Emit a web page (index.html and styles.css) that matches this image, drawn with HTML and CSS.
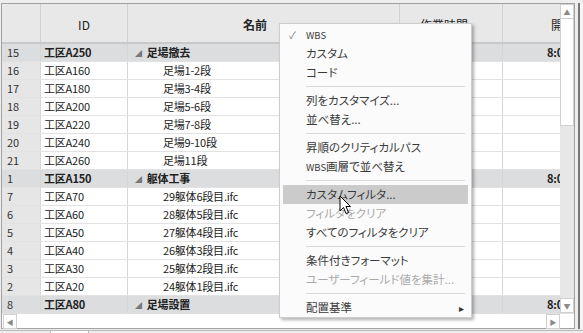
FILE: index.html
```html
<!DOCTYPE html>
<html lang="ja">
<head>
    <meta charset="UTF-8">
    <title>工程表</title>
    <link rel="stylesheet" href="styles.css">
</head>
<body>
    <div class="frame">
        <div class="main">
            <div class="table">
                <div class="cols head">
                    <div class="num"></div>
                    <div class="hcell">ID</div>
                    <div class="hcell bold">名前</div>
                    <div class="hcell work">作業時間</div>
                    <div class="hcell last">開始</div>
                </div>
                <div class="cols row group"><div class="num">15</div><div class="cell">工区A250</div><div class="cell name"><span class="tri">◢</span>足場撤去</div><div class="cell"></div><div class="cell time">8:00</div></div>
                <div class="cols row"><div class="num">16</div><div class="cell">工区A160</div><div class="cell child">足場1-2段</div><div class="cell"></div><div class="cell"></div></div>
                <div class="cols row"><div class="num">17</div><div class="cell">工区A180</div><div class="cell child">足場3-4段</div><div class="cell"></div><div class="cell"></div></div>
                <div class="cols row"><div class="num">18</div><div class="cell">工区A200</div><div class="cell child">足場5-6段</div><div class="cell"></div><div class="cell"></div></div>
                <div class="cols row"><div class="num">19</div><div class="cell">工区A220</div><div class="cell child">足場7-8段</div><div class="cell"></div><div class="cell"></div></div>
                <div class="cols row"><div class="num">20</div><div class="cell">工区A240</div><div class="cell child">足場9-10段</div><div class="cell"></div><div class="cell"></div></div>
                <div class="cols row"><div class="num">21</div><div class="cell">工区A260</div><div class="cell child">足場11段</div><div class="cell"></div><div class="cell"></div></div>
                <div class="cols row group"><div class="num">1</div><div class="cell">工区A150</div><div class="cell name"><span class="tri">◢</span>躯体工事</div><div class="cell"></div><div class="cell time">8:00</div></div>
                <div class="cols row"><div class="num">7</div><div class="cell">工区A70</div><div class="cell child">29躯体6段目.ifc</div><div class="cell"></div><div class="cell"></div></div>
                <div class="cols row"><div class="num">6</div><div class="cell">工区A60</div><div class="cell child">28躯体5段目.ifc</div><div class="cell"></div><div class="cell"></div></div>
                <div class="cols row"><div class="num">5</div><div class="cell">工区A50</div><div class="cell child">27躯体4段目.ifc</div><div class="cell"></div><div class="cell"></div></div>
                <div class="cols row"><div class="num">4</div><div class="cell">工区A40</div><div class="cell child">26躯体3段目.ifc</div><div class="cell"></div><div class="cell"></div></div>
                <div class="cols row"><div class="num">3</div><div class="cell">工区A30</div><div class="cell child">25躯体2段目.ifc</div><div class="cell"></div><div class="cell"></div></div>
                <div class="cols row"><div class="num">2</div><div class="cell">工区A20</div><div class="cell child">24躯体1段目.ifc</div><div class="cell"></div><div class="cell"></div></div>
                <div class="cols row group"><div class="num">8</div><div class="cell">工区A80</div><div class="cell name"><span class="tri">◢</span>足場設置</div><div class="cell"></div><div class="cell time">8:00</div></div>
            </div>
            <div class="vscroll">
                <div class="sbtn">&#9650;</div>
                <div class="thumb"></div>
                <div class="track"></div>
                <div class="sbtn">&#9660;</div>
            </div>
        </div>
        <div class="hscroll">
            <div class="sbtn">&#9664;</div>
            <div class="htrack"></div>
            <div class="sbtn">&#9654;</div>
        </div>
    </div>
    <div class="side"></div>
    <div class="tabs"><div class="tab"></div></div>

    <div class="menu">
        <div class="item"><span class="check">&#10003;</span><span class="small">WBS</span></div>
        <div class="item">カスタム</div>
        <div class="item">コード</div>
        <div class="sep"></div>
        <div class="item">列をカスタマイズ...</div>
        <div class="item">並べ替え...</div>
        <div class="sep"></div>
        <div class="item">昇順のクリティカルパス</div>
        <div class="item"><span class="small">WBS</span>画層で並べ替え</div>
        <div class="sep"></div>
        <div class="item active">カスタムフィルタ...</div>
        <div class="item disabled">フィルタをクリア</div>
        <div class="item">すべてのフィルタをクリア</div>
        <div class="sep"></div>
        <div class="item">条件付きフォーマット</div>
        <div class="item disabled">ユーザーフィールド値を集計...</div>
        <div class="sep"></div>
        <div class="item">配置基準<span class="arrow">&#9656;</span></div>
    </div>

    <svg class="cursor" width="13" height="20" viewBox="0 0 13 20">
        <path d="M1 1 L1 16 L4.5 12.5 L7 18.5 L9.5 17.5 L7 11.5 L11.5 11.5 Z" fill="#fff" stroke="#000" stroke-width="1" stroke-linejoin="round"/>
    </svg>
</body>
</html>
```

FILE: styles.css
```css
body {
    margin: 0;
    width: 583px;
    height: 333px;
    overflow: hidden;
    background: #eeeeee;
    font-family: "Noto Sans CJK JP", "Liberation Sans", sans-serif;
    font-size: 11px;
    color: #222;
    position: relative;
}
.frame {
    margin: 3px 0 0 1px;
    width: 572px;
    border: 1px solid #a2a2a2;
    background: #fff;
    display: flex;
    flex-direction: column;
}
.main {
    display: flex;
    height: 309px;
}
.table {
    width: 558px;
    overflow: hidden;
}
.cols {
    display: grid;
    grid-template-columns: 38px 87px 272px 103px 120px;
    width: 620px;
}
.head {
    height: 40px;
    background: #e8e8e8;
    border-bottom: 2px solid #c9c9c9;
    box-sizing: border-box;
    font-size: 12px;
}
.hcell {
    display: flex;
    align-items: center;
    justify-content: center;
    border-left: 1px solid #d2d2d2;
    padding-top: 2px;
}
.hcell.bold {
    font-weight: bold;
    justify-content: flex-start;
    padding-left: 115px;
}
.hcell.work {
    justify-content: flex-start;
    padding-left: 20px;
}
.hcell.last {
    justify-content: flex-start;
    padding-left: 48px;
}
.row {
    height: 18px;
    line-height: 17px;
    box-sizing: border-box;
    border-bottom: 1px solid #e2e2e2;
    letter-spacing: -0.2px;
}
.num {
    background: #e6e6e6;
    padding-left: 5px;
    color: #333;
    font-size: 11px;
    letter-spacing: 0;
}
.head .num {
    background: #e8e8e8;
}
.cell {
    border-left: 1px solid #d6d6d6;
    padding-left: 3px;
    white-space: nowrap;
    overflow: hidden;
}
.child {
    padding-left: 35px;
}
.group {
    background: #dcdddf;
    font-weight: bold;
}
.group .num {
    font-weight: normal;
    background: #dcdddf;
}
.tri {
    font-size: 7px;
    color: #777;
    font-weight: normal;
    margin: 0 5px 0 4px;
    vertical-align: 1px;
}
.time {
    padding-left: 44px;
}
.vscroll {
    width: 14px;
    display: flex;
    flex-direction: column;
    background: #e7e7e7;
}
.sbtn {
    height: 15px;
    width: 14px;
    box-sizing: border-box;
    background: #fff;
    border: 1px solid #d0d0d0;
    color: #8a8a8a;
    font-size: 7px;
    display: flex;
    align-items: center;
    justify-content: center;
}
.thumb {
    height: 106px;
    background: #fff;
    border: 1px solid #d0d0d0;
    border-top: none;
}
.track {
    flex: 1;
}
.hscroll {
    height: 15px;
    display: flex;
    border-top: 1px solid #e0e0e0;
    box-sizing: border-box;
    padding: 0 14px 0 1px;
}
.htrack {
    flex: 1;
}
.side {
    position: absolute;
    left: 578px;
    top: 3px;
    width: 5px;
    height: 326px;
    border-left: 2px solid #777;
    background: #f6f6f6;
}
.tabs {
    position: absolute;
    left: 0;
    top: 330px;
    width: 583px;
    height: 3px;
    border-top: 1px solid #b8b8b8;
}
.tab {
    margin-left: 50px;
    width: 37px;
    height: 3px;
    background: #fff;
    border-left: 1px solid #b8b8b8;
    border-right: 1px solid #b8b8b8;
}

/* context menu */
.menu {
    position: absolute;
    left: 279px;
    top: 23px;
    width: 193px;
    height: 295px;
    box-sizing: border-box;
    padding: 1px 0;
    background: #fbfbfb;
    border: 1px solid #cdcdcd;
    box-shadow: 2px 2px 3px rgba(0,0,0,0.3);
    font-size: 11.5px;
    font-feature-settings: "palt";
    color: #3a3a3a;
}
.item {
    position: relative;
    height: 19px;
    line-height: 19px;
    margin: 0 3px;
    padding-left: 23px;
    white-space: nowrap;
}
.item.active {
    background: #cbcbcb;
}
.item.disabled {
    color: #aaaaaa;
}
.small {
    font-size: 9.5px;
}
.check {
    position: absolute;
    left: 6px;
    top: 0;
    font-size: 10px;
    color: #777;
}
.arrow {
    position: absolute;
    right: 4px;
    top: 0;
    font-size: 10px;
    color: #333;
}
.sep {
    height: 9px;
    display: flex;
    align-items: center;
}
.sep::after {
    content: "";
    flex: 1;
    margin: 0 6px 0 26px;
    border-top: 1px solid #dadada;
}
.cursor {
    position: absolute;
    left: 339px;
    top: 195px;
}
```
